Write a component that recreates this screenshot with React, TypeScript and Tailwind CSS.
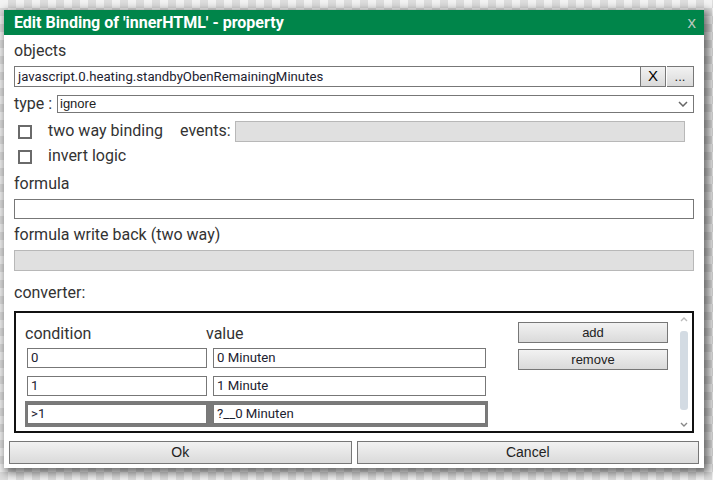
import React from "react";

const font = { fontFamily: "Roboto, 'Liberation Sans', Arial, sans-serif" };
const arial = { fontFamily: "'Liberation Sans', Arial, sans-serif" };

function Checkbox() {
  return <div className="w-[14px] h-[14px] border-2 border-[#6a6a6a] bg-white shrink-0" />;
}

function Btn({ children, className = "" }: { children: React.ReactNode; className?: string }) {
  return (
    <div
      className={
        "flex items-center justify-center border border-[#777] bg-gradient-to-b from-[#f2f2f2] to-[#dadada] text-[13px] text-[#222] " +
        className
      }
      style={arial}
    >
      {children}
    </div>
  );
}

function TextInput({ value, className = "" }: { value: string; className?: string }) {
  return (
    <div
      className={"flex items-center border border-[#777] bg-white px-[3px] text-[13.2px] text-[#1c2230] " + className}
      style={font}
    >
      {value}
    </div>
  );
}

export default function App() {
  return (
    <div
      className="w-[713px] h-[480px] overflow-hidden pt-[10px] pl-[4px] bg-[repeating-conic-gradient(#dedede_0_25%,#f3f3f3_0_50%)] bg-[length:16px_16px]"
      style={font}
    >
      <div className="w-[700px] h-[458px] bg-white flex flex-col shadow-[3px_3px_9px_2px_rgba(0,0,0,0.55)]">
        {/* title */}
        <div className="h-[25px] bg-[#00854a] flex items-center justify-between pl-[10px] pr-[8px]">
          <span className="text-white font-bold text-[16px] leading-none">Edit Binding of 'innerHTML' - property</span>
          <span className="text-[#b8c8bf] text-[17px] leading-none" style={arial}>x</span>
        </div>

        <div className="px-[10px] flex flex-col text-[16px] text-[#333]">
          <div className="h-[31px] flex items-center">objects</div>
          <div className="h-[21px] flex">
            <TextInput value="javascript.0.heating.standbyObenRemainingMinutes" className="flex-1 h-[21px]" />
            <Btn className="w-[25px] h-[21px] border-l-0 text-[15px] text-black">X</Btn>
            <Btn className="w-[27px] h-[21px] border-l-0 text-[11px] ml-[1px]">...</Btn>
          </div>

          <div className="mt-[8px] h-[18px] flex items-center">
            <span className="w-[43px] shrink-0 leading-none">type :</span>
            <div className="flex-1 h-[18px] border border-[#777] bg-white flex items-center justify-between pl-[2px] pr-[5px]">
              <span className="text-[13px] text-[#222]" style={arial}>ignore</span>
              <svg width="10" height="6" viewBox="0 0 10 6">
                <path d="M1 1 L5 5 L9 1" stroke="#666" strokeWidth="1.5" fill="none" />
              </svg>
            </div>
          </div>

          <div className="mt-[8px] h-[21px] flex items-center">
            <div className="w-[34px] pl-[4px] flex"><Checkbox /></div>
            <span className="w-[132px] leading-none relative top-[-1px]">two way binding</span>
            <span className="w-[55px] leading-none relative top-[-1px]">events:</span>
            <div className="w-[450px] h-[21px] bg-[#e0e0e0] border border-[#b8b8b8]" />
          </div>

          <div className="mt-[4px] h-[22px] flex items-center">
            <div className="w-[34px] pl-[4px] flex"><Checkbox /></div>
            <span className="leading-none relative top-[-1px]">invert logic</span>
          </div>

          <div className="h-[31px] flex items-center">formula</div>
          <div className="h-[20px] border border-[#777] bg-white" />
          <div className="h-[31px] flex items-center">formula write back (two way)</div>
          <div className="h-[21px] bg-[#e0e0e0] border border-[#b8b8b8]" />
          <div className="h-[40px] pt-[4px] flex items-center text-[16px]">converter:</div>

          {/* converter */}
          <div className="h-[122px] border-2 border-[#111] flex relative">
            <div className="flex flex-col pl-[9px] pt-[9px]">
              <div className="h-[24px] flex items-start">
                <span className="w-[181px] leading-none relative top-[4px]">condition</span>
                <span className="leading-none relative top-[4px]">value</span>
              </div>
              <div className="flex flex-col pl-[2px] pt-[2px]">
                <div className="flex gap-[6px] h-[20px]">
                  <TextInput value="0" className="w-[180px] h-[20px]" />
                  <TextInput value="0 Minuten" className="w-[273px] h-[20px]" />
                </div>
                <div className="flex gap-[6px] h-[20px] mt-[8px]">
                  <TextInput value="1" className="w-[180px] h-[20px]" />
                  <TextInput value="1 Minute" className="w-[273px] h-[20px]" />
                </div>
                <div className="flex gap-[6px] mt-[5px] ml-[-2px] p-[2px] py-[3px] bg-[#7a7a7a] w-[463px]">
                  <TextInput value=">1" className="w-[180px] h-[20px]" />
                  <TextInput value="?__0 Minuten" className="w-[273px] h-[20px]" />
                </div>
              </div>
            </div>
            <div className="flex flex-col gap-[6px] ml-[30px] pt-[9px]">
              <Btn className="w-[150px] h-[21px]">add</Btn>
              <Btn className="w-[150px] h-[21px]">remove</Btn>
            </div>
            {/* scrollbar */}
            <div className="absolute right-[3px] top-[3px] bottom-[3px] w-[10px] flex flex-col items-center">
              <svg width="8" height="6" viewBox="0 0 8 6"><path d="M1 5 L4 2 L7 5" stroke="#bbb" strokeWidth="1.4" fill="none" /></svg>
              <div className="w-[8px] h-[79px] mt-[9px] bg-[#d3dbe3] rounded-[3px]" />
              <div className="flex-1" />
              <svg width="8" height="6" viewBox="0 0 8 6"><path d="M1 1 L4 4 L7 1" stroke="#888" strokeWidth="1.4" fill="none" /></svg>
            </div>
          </div>
        </div>

        <div className="mt-[8px] px-[5px] flex gap-[5px]">
          <Btn className="flex-1 h-[23px] text-[14px]">Ok</Btn>
          <Btn className="flex-1 h-[23px] text-[14px]">Cancel</Btn>
        </div>
      </div>
    </div>
  );
}
